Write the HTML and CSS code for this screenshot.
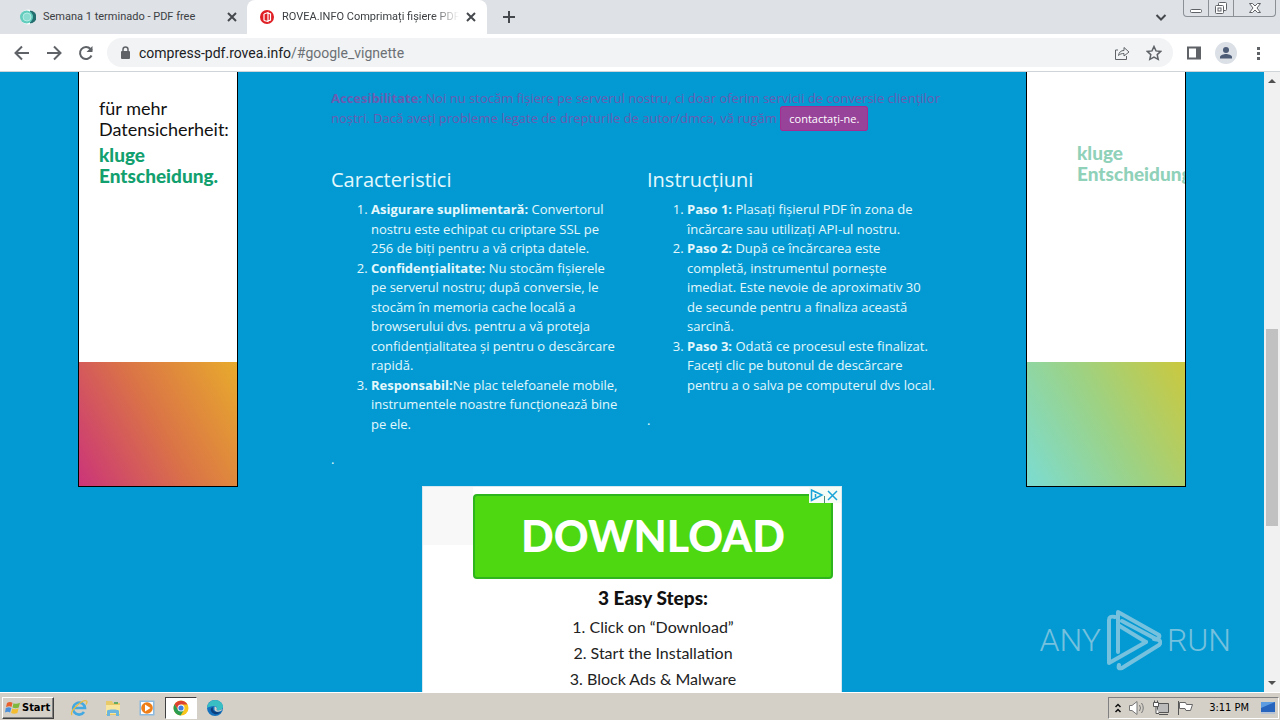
FILE: index.html
```html
<!DOCTYPE html>
<html lang="ro">
<head>
<meta charset="utf-8">
<title>ROVEA.INFO Comprimați fișiere PDF</title>
<link rel="stylesheet" href="styles.css">
</head>
<body>
<header class="tabs">
  <div class="tab">
    <svg class="favicon" viewBox="0 0 16 16"><circle cx="8" cy="8" r="7.500" fill="#fff"/><path d="M10 1.500a6.500 6.500 0 0 1 0 13z" fill="#256e70"/><circle cx="6.500" cy="8" r="6.500" fill="#62cdbd"/><circle cx="7" cy="8" r="4" fill="#8adbd0" stroke="#b4ebe3"/></svg>
    <span class="tab-title">Semana 1 terminado - PDF free</span>
    <button class="tab-close" aria-label="Close tab"><svg viewBox="0 0 10 10"><path d="M1 1l8 8M9 1L1 9"/></svg></button>
  </div>
  <div class="tab tab-active">
    <svg class="favicon" viewBox="0 0 16 16"><circle cx="8" cy="8" r="7" fill="#df2026"/><path d="M5 5l4-1.500v9L5 11.500M5 5v6.500M9 4l2.500 1v6L9 12" fill="none" stroke="#fff" stroke-width="1.200"/></svg>
    <span class="tab-title tab-fade">ROVEA.INFO Comprimați fișiere PDF</span>
    <button class="tab-close" aria-label="Close tab"><svg viewBox="0 0 10 10"><path d="M1 1l8 8M9 1L1 9"/></svg></button>
  </div>
  <button class="new-tab" aria-label="New tab"><svg viewBox="0 0 14 14"><path d="M7 1v12M1 7h12"/></svg></button>
  <button class="tab-search" aria-label="Search tabs"><svg viewBox="0 0 12 12"><path d="M1.500 4L6 8.500 10.500 4"/></svg></button>
  <div class="window-buttons">
    <button aria-label="Minimize"><svg viewBox="0 0 14 14"><rect x="1.500" y="8.500" width="11" height="3" rx="1"/></svg></button>
    <button aria-label="Restore"><svg viewBox="0 0 14 14"><rect x="4.500" y="1.500" width="8" height="8" rx="1"/><rect x="1.500" y="4.500" width="8" height="8" rx="1"/><rect x="4" y="7" width="3" height="3"/></svg></button>
    <button aria-label="Close"><svg viewBox="0 0 14 14"><path d="M1.500 2.500h3L7 5l2.500-2.500h3L9 7l3.500 4.500h-3L7 9l-2.500 2.500h-3L5 7z"/></svg></button>
  </div>
</header>

<nav class="toolbar">
  <div class="nav-buttons">
    <button aria-label="Back"><svg viewBox="0 0 16 16"><path d="M15 8H2M8 1.500L1.500 8 8 14.500"/></svg></button>
    <button aria-label="Forward"><svg viewBox="0 0 16 16"><path d="M1 8h13M8 1.500L14.500 8 8 14.500"/></svg></button>
    <button aria-label="Reload"><svg viewBox="0 0 16 16"><path d="M13.500 10.500A6 6 0 1 1 12.500 4l1.500 1.500"/><path d="M14.500 1v6h-6z" fill="#5f6368" stroke="none"/></svg></button>
  </div>
  <div class="omnibox">
    <svg class="lock" viewBox="0 0 12 14"><rect x="2" y="5" width="9" height="8" rx="1" fill="#5f6368"/><path d="M4 6V3.500a2.500 2.500 0 0 1 5 0V6" fill="none" stroke="#5f6368" stroke-width="1.500"/></svg>
    <a class="url" href="#google_vignette">compress-pdf.rovea.info<span>/#google_vignette</span></a>
    <button aria-label="Share"><svg viewBox="0 0 16 16"><path class="thin" d="M4 5H1.500v9.500h11V11M4.500 10.500C5 7 7 5.500 10 5.500v-3L15 7l-5 4V8.500c-2.500 0-4 .5-5.500 2z"/></svg></button>
    <button aria-label="Bookmark"><svg viewBox="0 0 16 16"><path class="mid" d="M8 1.500l2 4.400 4.800.5-3.600 3.200 1 4.700L8 12l-4.200 2.300 1-4.700-3.600-3.200L6 5.900z"/></svg></button>
  </div>
  <button aria-label="Side panel"><svg viewBox="0 0 16 16"><path d="M2 2.500h12v11H2z"/><path d="M10 2h5v12h-5z" fill="#5f6368" stroke="none"/></svg></button>
  <button class="profile" aria-label="Profile"><svg viewBox="0 0 22 22"><circle cx="11" cy="11" r="11" fill="#dbe0e7"/><circle cx="11" cy="8" r="3" fill="#4c5b76"/><path d="M5 16.500v-1.500c0-2 4-3 6-3s6 1 6 3v1.500z" fill="#4c5b76"/></svg></button>
  <button aria-label="Menu"><svg viewBox="0 0 16 16"><path d="M7 2h3v3H7zM7 7h3v3H7zM7 12h3v3H7z" fill="#5f6368" stroke="none"/></svg></button>
</nav>

<div class="viewport">
  <div class="page">
    <aside class="side-ad">
      <div class="ad-copy"><p>für mehr<br>Datensicherheit:</p><p class="ad-strong">kluge<br>Entscheidung.</p></div>
      <div class="ad-block warm"></div>
    </aside>
    <main class="content">
      <p class="notice"><strong>Accesibilitate:</strong> Noi nu stocăm fișiere pe serverul nostru, ci doar oferim servicii de conversie clienților noștri. Dacă aveți probleme legate de drepturile de autor/dmca, vă rugăm <a class="contact" href="#contact">contactați-ne.</a></p>
      <div class="columns">
        <section>
          <h2>Caracteristici</h2>
          <ol>
            <li><strong>Asigurare suplimentară:</strong> Convertorul nostru este echipat cu criptare SSL pe 256 de biți pentru a vă cripta datele.</li>
            <li><strong>Confidențialitate:</strong> Nu stocăm fișierele pe serverul nostru; după conversie, le stocăm în memoria cache locală a browserului dvs. pentru a vă proteja confidențialitatea și pentru o descărcare rapidă.</li>
            <li><strong>Responsabil:</strong>Ne plac telefoanele mobile, instrumentele noastre funcționează bine pe ele.</li>
          </ol>
          <p>.</p>
        </section>
        <section>
          <h2>Instrucțiuni</h2>
          <ol>
            <li><strong>Paso 1:</strong> Plasați fișierul PDF în zona de încărcare sau utilizați API-ul nostru.</li>
            <li><strong>Paso 2:</strong> După ce încărcarea este completă, instrumentul pornește imediat. Este nevoie de aproximativ 30 de secunde pentru a finaliza această sarcină.</li>
            <li><strong>Paso 3:</strong> Odată ce procesul este finalizat. Faceți clic pe butonul de descărcare pentru a o salva pe computerul dvs local.</li>
          </ol>
          <p>.</p>
        </section>
      </div>
      <div class="banner">
        <div class="banner-shade"></div>
        <div class="banner-main">
          <button class="download">DOWNLOAD</button>
          <h3>3 Easy Steps:</h3>
          <p>1. Click on “Download”</p>
          <p>2. Start the Installation</p>
          <p>3. Block Ads &amp; Malware</p>
        </div>
        <div class="ad-choices">
          <svg viewBox="0 0 32 16"><path d="M2.500 3v10.500L13 8z" fill="none" stroke="#1aa3d8" stroke-width="1.500"/><path d="M6.500 7v3.500M6.500 5v1" stroke="#1aa3d8" stroke-width="1.500"/><path d="M15.500 9v7" stroke="#4b8b77"/><path d="M19 4l9 9M28 4l-9 9" stroke="#1aa3d8" stroke-width="1.500"/></svg>
        </div>
      </div>
    </main>
    <aside class="side-ad late">
      <div class="ad-copy"><p class="ad-strong">kluge<br>Entscheidung.</p></div>
      <div class="ad-block cool"></div>
    </aside>
    <div class="watermark">
      <span>ANY</span>
      <svg viewBox="0 0 56 64"><g fill="none" stroke="#75c1de" stroke-width="4" stroke-linejoin="round" stroke-linecap="round"><path d="M9 9C5 8 3 9 3 12v43l37-21"/><path d="M12 44V4l41 23c1 2 0 3-3 4L16 13"/><path d="M13 57c-1 3 0 4 3 3l37-23c2-2 2-3 0-5l-5-1M40 34L12 17"/></g></svg>
      <span>RUN</span>
    </div>
  </div>
  <div class="scrollbar"><i class="arrow-up"></i><div class="thumb"></div><i class="arrow-down"></i></div>
</div>

<footer class="taskbar">
  <button class="start"><svg viewBox="0 0 16 16"><path d="M2 3c2-1.500 4-1.200 5.500-.3L6.500 7C5 6 3.500 6 1 7z" fill="#e8602c"/><path d="M8.500 3.200c2 1 4 .8 6.500-.4l-1.200 4.700c-2.300 1-4.300 1-6.300 0z" fill="#80b83b"/><path d="M.8 8C3 7 4.800 7 6.300 8l-1.200 4.500C3.500 11.500 2 11.500 0 12.500z" fill="#4a8fd9"/><path d="M7.300 8.500c2 1 4 .8 6.300-.2l-1.200 4.600c-2.300 1-4.300 1-6.300 0z" fill="#f4bd31"/></svg>Start</button>
  <button class="task" aria-label="Internet Explorer"><svg viewBox="0 0 18 18"><path d="M14 13a6 6 0 1 1 1-4H4.500" fill="none" stroke="#45a9e1" stroke-width="2.600"/><path d="M2 16C-1 12 13 0 16.500 2c1 .7.500 2-.5 3.500" fill="none" stroke="#e8bd42" stroke-width="1.300"/></svg></button>
  <button class="task" aria-label="Explorer"><svg viewBox="0 0 18 18"><path d="M2 2h6l1 2h7v12H2z" fill="#e8ca69"/><path d="M2 6h14v9H2z" fill="#f8e69e"/><path d="M3 17v-5c0-2 12-2 12 0v5h-3v-3H6v3z" fill="#6cb6dd"/><path d="M10 3h4v2h-4z" fill="#64aa62"/></svg></button>
  <button class="task" aria-label="Media Player"><svg viewBox="0 0 18 18"><rect x="1.500" y="1.500" width="15" height="15" fill="#8cb9df"/><rect x="3" y="3" width="12" height="12" fill="#fff"/><circle cx="9" cy="9" r="5.800" fill="#ed7e18"/><path d="M7 5.500v7L12.500 9z" fill="#fff"/></svg></button>
  <button class="task task-active" aria-label="Chrome"><svg viewBox="0 0 18 18"><circle cx="9" cy="9" r="7.500" fill="#f9c51c"/><path d="M2.500 5.300A7.500 7.500 0 0 1 15.500 5.500H9L6 11z" fill="#dd4132"/><path d="M2.500 5.300A7.500 7.500 0 0 0 8.500 16.500L12 11H6z" fill="#2a9b50"/><circle cx="9" cy="9" r="3.500" fill="#fff"/><circle cx="9" cy="9" r="2.600" fill="#3f7ee0"/></svg></button>
  <button class="task" aria-label="Edge"><svg viewBox="0 0 18 18"><circle cx="9" cy="9" r="8" fill="#1672bd"/><path d="M1 9C1.500 4 5 1 9 1c5 0 8.500 4 8 7-.5 3-4 4-6.500 3 1.500-2 0-4-2.500-4C5 7 2.500 8 1 9z" fill="#39bec4"/><path d="M7 8c-1 3 1 6 8 5-3 3-8 3-10-1-.8-2 0-3 2-4z" fill="#0c3d7d"/><path d="M8.500 7.500c2 0 3 2 2 3.500 2 1 4 .5 6-1-1 3-6.500 4-8 1z" fill="#d4d0c8"/></svg></button>
  <div class="tray">
    <svg class="tray-chevron" viewBox="0 0 8 12"><path d="M1.500 5L4 2.500 6.500 5M1.500 10L4 7.500 6.500 10" fill="none" stroke="#111" stroke-width="1.500"/></svg>
    <svg class="tray-icon" viewBox="0 0 18 18"><path d="M1.500 6.500H4l5-4v13l-5-4H1.500z" fill="#fff" stroke="#777"/><path d="M11.500 6q2 3 0 6M13.500 4q3.500 5 0 10" fill="none" stroke="#777"/></svg>
    <svg class="tray-icon" viewBox="0 0 18 18"><path d="M5.500 4.500h11v9h-11zM7 15.500h9" fill="#bbb" stroke="#555"/><path d="M1.500 3.500h5v4h-5zM4 7.500v7h3M2.500 1.500v2M5.500 1.500v2" fill="#fff" stroke="#555"/></svg>
    <svg class="tray-icon" viewBox="0 0 18 18"><path d="M2.500 2v14" stroke="#555"/><path d="M3.500 3.500h6l1 2h6l-2 6H10l-1-2H3.500z" fill="#fff" stroke="#666"/></svg>
    <time>3:11 PM</time>
    <svg class="tray-icon" viewBox="0 0 18 18"><path d="M2 3h14v10H2z" fill="#2764bd"/><path d="M2 3h14L2 9z" fill="#5d9ce1"/><path d="M2 13h14v2H2z" fill="#b5c2d6"/></svg>
  </div>
</footer>
</body>
</html>
```

FILE: styles.css
```css
* { box-sizing: border-box; }
body {
  margin: 0;
  height: 100vh;
  display: flex;
  flex-direction: column;
  overflow: hidden;
  font: 13px/1.5 "Open Sans", sans-serif;
}
button { border: 0; background: none; padding: 0; font: inherit; color: inherit; }
svg { display: block; }
p { margin: 0; }

.tabs {
  display: flex;
  height: 34px;
  flex: none;
  background: #dee1e6;
  font: 11px/16px Roboto, sans-serif;
  color: #3c4043;
}
.tab { display: flex; align-items: center; width: 247px; padding: 0 10px 0 20px; gap: 7px; }
.tab-active { width: 240px; padding: 0 11px 0 12px; background: #fff; border-radius: 8px 8px 0 0; }
.favicon { width: 16px; height: 16px; flex: none; }
.tab-title { flex: 1; overflow: hidden; white-space: nowrap; }
.tab-fade { -webkit-mask-image: linear-gradient(90deg, #000 85%, transparent); mask-image: linear-gradient(90deg, #000 85%, transparent); }
.tab-close svg { width: 10px; height: 10px; stroke: #45494d; stroke-width: 2; }
.tab-close { width: 10px; }
.new-tab { margin-left: 15px; }
.new-tab svg { width: 14px; height: 14px; stroke: #45494d; stroke-width: 2; }
.tab-search { margin-left: auto; margin-right: 16px; }
.tab-search svg { width: 12px; height: 12px; fill: none; stroke: #45494d; stroke-width: 2; }
.window-buttons {
  display: flex;
  height: 17px;
  margin-right: 4px;
  border: 1px solid #8b9097;
  border-top: 0;
  border-radius: 0 0 4px 4px;
}
.window-buttons button { width: 25px; display: grid; place-items: center; border-right: 1px solid #8b9097; }
.window-buttons button:last-child { width: 41px; border: 0; }
.window-buttons svg { width: 14px; height: 14px; fill: #fff; stroke: #5f6368; }

.toolbar {
  display: flex;
  align-items: center;
  gap: 13px;
  flex: none;
  height: 38px;
  padding: 0 14px;
  background: #fff;
  border-bottom: 1px solid #cfd4d8;
}
.nav-buttons { display: flex; gap: 16px; }
.toolbar button svg { width: 16px; height: 16px; fill: none; stroke: #5f6368; stroke-width: 2; }
.toolbar .thin { stroke-width: 1; }
.toolbar .mid { stroke-width: 1.5; }
.toolbar .profile svg { width: 22px; height: 22px; stroke: none; }
.omnibox {
  flex: 1;
  display: flex;
  align-items: center;
  gap: 16px;
  height: 29px;
  padding: 0 11px 0 12px;
  background: #f1f3f4;
  border-radius: 15px;
}
.lock { width: 12px; height: 14px; margin-right: -8px; }
.url { flex: 1; font: 14px/20px Roboto, sans-serif; color: #202124; text-decoration: none; }
.url span { color: #6c7074; }

.viewport { flex: 1; min-height: 0; display: flex; }
.page {
  position: relative;
  flex: 1;
  display: flex;
  justify-content: center;
  gap: 78px;
  align-items: flex-start;
  overflow: hidden;
  background: #039ad3;
  color: #e4f8fc;
}
.side-ad {
  width: 160px;
  flex: none;
  overflow: hidden;
  background: #fff;
  border: 1px solid #000;
  border-top: 0;
  font: 18px/21px Lato, sans-serif;
  color: #111;
}
.ad-copy { height: 290px; padding: 26px 0 0 20px; white-space: nowrap; }
.ad-strong { margin-top: 4px; font-size: 19px; font-weight: 900; color: #13a06f; }
.late .ad-copy { padding: 66px 0 0 50px; }
.late .ad-strong { color: #8fd1b9; }
.ad-block { height: 124px; }
.warm { background: linear-gradient(60deg, #cb3479, #da7347 50%, #e8ab2c); }
.cool { background: linear-gradient(60deg, #7bdcd2, #9cd285 50%, #cbc83d); }

.content { width: 632px; flex: none; padding-top: 17px; }
.notice { padding-left: 15px; color: #6a5cb0; }
.contact {
  padding: 4px 8px;
  border: 1px solid #a62c92;
  border-radius: 3px;
  background: #974399;
  color: #fff;
  font-size: 11px;
  text-decoration: none;
}
.columns { display: grid; grid-template-columns: 1fr 1fr; margin-top: 39px; }
.columns section { padding: 0 10px 0 15px; }
.columns h2 { margin: 0 0 7px; font-size: 20px; line-height: 26px; font-weight: 400; }
.columns ol { margin: 0 0 16px; padding-left: 40px; }
.columns p { margin-bottom: 16px; }

.banner {
  position: relative;
  display: flex;
  width: 420px;
  height: 260px;
  margin: 0 auto;
  background: #fff;
  border: 1px solid #d8e8ee;
  font-family: Lato, sans-serif;
  font-size: 16px;
  line-height: 26px;
  color: #222;
}
.banner-shade { width: 50px; height: 58px; background: #f8f8f9; }
.banner-main { flex: 1; padding: 7px 8px 0 0; text-align: center; }
.download {
  display: block;
  width: 100%;
  height: 85px;
  border: 2px solid #2eb41c;
  border-radius: 4px;
  background: #4dd811;
  color: #fff;
  font-size: 43px;
  font-weight: 900;
}
.banner h3 { margin: 6px 0 3px; font-size: 19px; line-height: 26px; font-weight: 900; color: #111; }
.ad-choices { position: absolute; top: 0; right: 0; width: 32px; height: 16px; background: #f5fcf5; }

.watermark {
  position: absolute;
  right: 33px;
  bottom: 20px;
  display: flex;
  align-items: center;
  gap: 5px;
  color: #75c1de;
  font: 300 32px/64px Roboto, sans-serif;
}
.watermark svg { width: 56px; height: 64px; }

.scrollbar { width: 16px; display: flex; flex-direction: column; align-items: center; padding: 7px 0; background: #f1f1f1; }
.thumb { width: 12px; height: 197px; margin-top: 246px; background: #c1c1c1; }
.arrow-up, .arrow-down { border: 4px solid transparent; border-top: 0; border-bottom: 4px solid #505050; }
.arrow-down { margin-top: auto; border-top: 4px solid #505050; border-bottom: 0; }

.taskbar {
  display: flex;
  align-items: center;
  flex: none;
  height: 28px;
  padding: 2px 1px 0 2px;
  background: #d4d0c8;
  border-top: 1px solid #fff;
  font: 11px/16px "DejaVu Sans Condensed", sans-serif;
  color: #000;
}
.start {
  display: flex;
  align-items: center;
  gap: 1px;
  width: 52px;
  height: 22px;
  margin-right: 9px;
  padding-left: 2px;
  border: 1px solid;
  border-color: #fff #404040 #404040 #fff;
  box-shadow: inset -1px -1px #808080;
  font-weight: 700;
}
.start svg { width: 16px; height: 16px; flex: none; }
.task { width: 32px; height: 22px; margin-right: 2px; display: grid; place-items: center; }
.task svg { width: 18px; height: 18px; }
.task-active { background: #fff; border: 1px solid; border-color: #404040 #fff #fff #404040; }
.tray {
  display: flex;
  align-items: center;
  gap: 6px;
  height: 22px;
  margin-left: auto;
  padding: 0 1px 0 5px;
  border: 1px solid;
  border-color: #808080 #fff #fff #808080;
}
.tray-chevron { width: 8px; height: 12px; }
.tray-icon { width: 18px; height: 18px; }
.tray time { margin: 0 4px 0 9px; }
```
